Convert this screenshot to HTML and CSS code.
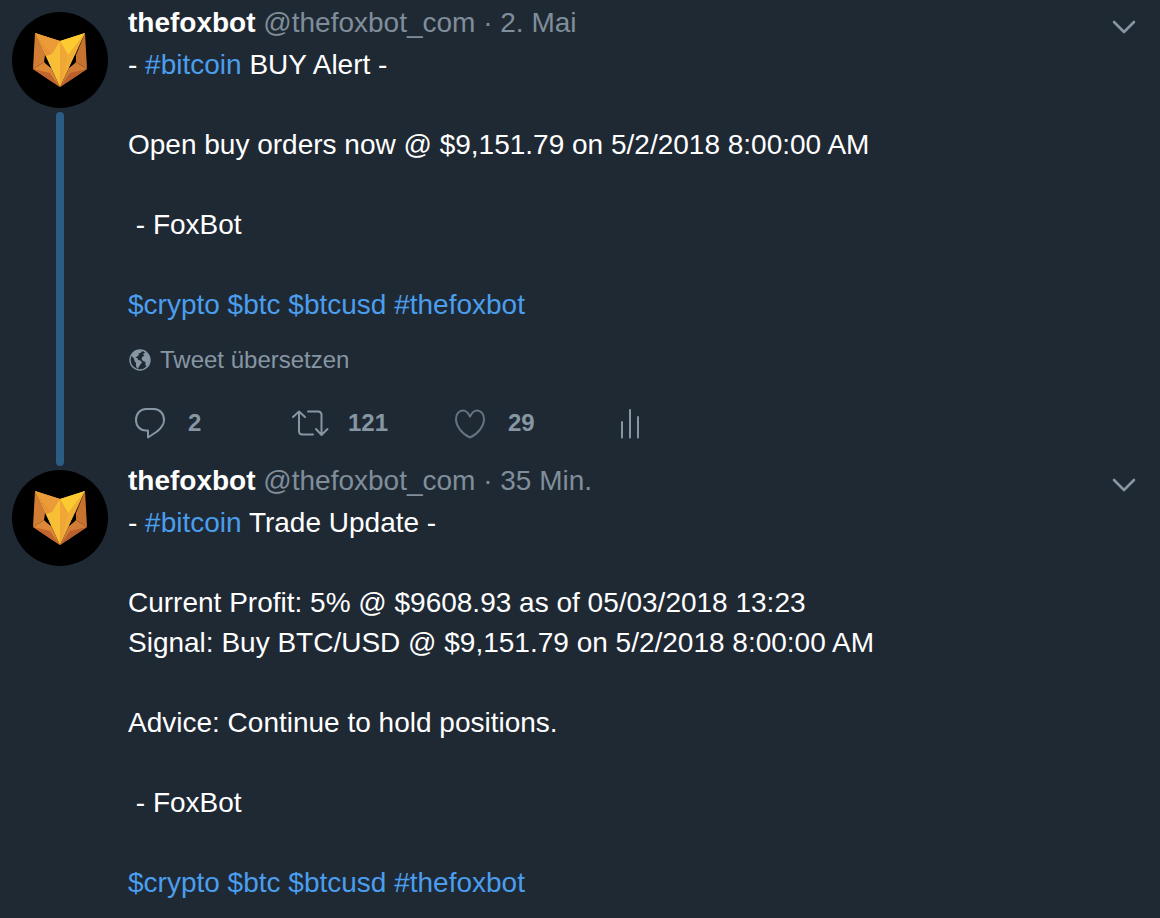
FILE: index.html
```
<!DOCTYPE html>
<html lang="de">

<head>
    <meta charset="UTF-8">
    <meta name="viewport" content="width=device-width, initial-scale=1">
    <title>thefoxbot</title>
    <link rel="stylesheet" href="styles.css">
</head>

<body>
    <!-- shared icons -->
    <svg class="sprite" aria-hidden="true">
        <symbol id="fox" viewBox="0 0 96 96">
            <circle cx="48" cy="48" r="48" fill="#000"/>
            <!-- ears -->
            <path d="M23 21L33 43L32 50L21 57Z" fill="#d27d33"/>
            <path d="M73 21L64 43L64 50L75 57Z" fill="#c8722f"/>
            <!-- cheeks -->
            <path d="M21 57L32 50L39 56L48 75Z" fill="#dd8737"/>
            <path d="M75 57L64 50L57 56L48 75Z" fill="#d27b35"/>
            <path d="M21 57L38 61L48 75Z" fill="#c0662e"/>
            <path d="M75 57L58 61L48 75Z" fill="#b9602c"/>
            <!-- face -->
            <path d="M23 21L48 29L48 75L33 43Z" fill="#f8be35"/>
            <path d="M23 21L48 29L40 42Z" fill="#eb9c38"/>
            <path d="M23 21L40 42L34 44Z" fill="#e89335"/>
            <path d="M73 21L48 29L48 75L63 43Z" fill="#f2ad35"/>
            <path d="M73 21L48 29L56 43Z" fill="#fcca31"/>
            <path d="M48 29L56 43L48 75Z" fill="#f0a637"/>
            <!-- eyes -->
            <path d="M33 43L39 56L33 51Z" fill="#000"/>
            <path d="M63 43L57 56L63 51Z" fill="#000"/>
        </symbol>
        <symbol id="chevron" viewBox="0 0 24 14">
            <path d="M2 2L12 12L22 2" fill="none" stroke="currentColor" stroke-width="2.6" stroke-linecap="round" stroke-linejoin="round"/>
        </symbol>
    </svg>

    <main class="timeline">
        <article class="tweet">
            <div class="side">
                <svg class="avatar" role="img" aria-label="thefoxbot"><use href="#fox"/></svg>
                <div class="thread"></div>
            </div>
            <div class="content">
                <header class="head">
                    <p class="meta"><a class="name" href="#">thefoxbot</a> @thefoxbot_com · 2. Mai</p>
                    <button class="more" type="button" aria-label="Mehr"><svg><use href="#chevron"/></svg></button>
                </header>
                <p class="text">- <a href="#">#bitcoin</a> BUY Alert -

Open buy orders now @ $9,151.79 on 5/2/2018 8:00:00 AM

 - FoxBot

<a href="#">$crypto</a> <a href="#">$btc</a> <a href="#">$btcusd</a> <a href="#">#thefoxbot</a></p>
                <button class="translate" type="button">
                    <svg viewBox="0 0 22 22">
                        <circle cx="11" cy="11" r="10" fill="none" stroke="currentColor" stroke-width="1.4"/>
                        <path d="M3 5C5 2.500 8 1 11.500 1L13 2.500L11.500 4L9.500 4.500L10 6L8 7.500L6.500 9L8.500 9L9 11L11.500 11.500L13 13.500L11 16L9.500 18.500L8.500 20L7 17L7 14L5.500 12L5 9.500L3 7.500Z" fill="currentColor"/>
                        <path d="M14 5L16.500 3L19.500 6L21 11L20 15L17.500 18L16.500 16L16.500 13L14 12L12.500 10L13.500 7.500L15.500 7Z" fill="currentColor"/>
                    </svg>
                    Tweet übersetzen
                </button>
                <div class="actions">
                    <button class="action" type="button" aria-label="2 Antworten">
                        <svg viewBox="0 0 44 40">
                            <path d="M18 6H26C32 6 36 11 36 17C36 23 32 26 29 28.500L20 34.500V27.500H18C12 27.500 8 23 8 17C8 11 12 6 18 6Z"/>
                        </svg>
                        2
                    </button>
                    <button class="action" type="button" aria-label="121 Retweets">
                        <svg viewBox="0 0 44 40">
                            <path d="M5 14L11 8.500L17 14M11 9V28Q11 31.500 14.500 31.500H25M20 8.500H30Q33.500 8.500 33.500 12V31M28 26L33.500 32L39.500 26"/>
                        </svg>
                        121
                    </button>
                    <button class="action like" type="button" aria-label="29 Gefällt mir">
                        <svg viewBox="0 0 44 40">
                            <path d="M22 13.500C20 9.500 18 7.500 15 7.500C11 7.500 8 11 8 16C8 23 14 31 22 34.500C30 31 36 23 36 16C36 11 33 7.500 29 7.500C26 7.500 24 9.500 22 13.500Z"/>
                        </svg>
                        29
                    </button>
                    <button class="action" type="button" aria-label="Tweet-Aktivität">
                        <svg viewBox="0 0 44 40">
                            <path d="M14 19V34.500M22 7V34.500M30 14V34.500"/>
                        </svg>
                    </button>
                </div>
            </div>
        </article>

        <article class="tweet">
            <div class="side">
                <svg class="avatar" role="img" aria-label="thefoxbot"><use href="#fox"/></svg>
            </div>
            <div class="content">
                <header class="head">
                    <p class="meta"><a class="name" href="#">thefoxbot</a> @thefoxbot_com · 35 Min.</p>
                    <button class="more" type="button" aria-label="Mehr"><svg><use href="#chevron"/></svg></button>
                </header>
                <p class="text">- <a href="#">#bitcoin</a> Trade Update -

Current Profit: 5% @ $9608.93 as of 05/03/2018 13:23
Signal: Buy BTC/USD @ $9,151.79 on 5/2/2018 8:00:00 AM

Advice: Continue to hold positions.

 - FoxBot

<a href="#">$crypto</a> <a href="#">$btc</a> <a href="#">$btcusd</a> <a href="#">#thefoxbot</a></p>
            </div>
        </article>
    </main>
</body>

</html>
```
FILE: styles.css
```
* {
    box-sizing: border-box;
}

body,
p {
    margin: 0;
}

body {
    background: #1f2934;
    color: #fff;
    font-family: "Helvetica Neue", "Liberation Sans", Arial, sans-serif;
    font-size: 28px;
    line-height: 40px;
}

a {
    color: #4a9eed;
    text-decoration: none;
}

button {
    padding: 0;
    border: 0;
    background: none;
    color: #8796a3;
    font: inherit;
    cursor: pointer;
}

.sprite {
    position: absolute;
    width: 0;
    height: 0;
}

.timeline {
    min-height: 100vh;
    border-bottom: 1px solid #29273a;
}

.tweet {
    display: flex;
    gap: 20px;
    padding: 0 24px 0 12px;
}

.side {
    display: flex;
    flex: none;
    flex-direction: column;
    align-items: center;
    gap: 4px;
    padding-top: 12px;
}

.avatar {
    display: block;
    width: 96px;
    height: 96px;
}

/* runs on into the gap above the next avatar */
.thread {
    flex: 1;
    width: 8px;
    margin-bottom: -8px;
    border-radius: 4px;
    background: #2b5c83;
}

.content {
    flex: 1;
    min-width: 0;
    padding: 3px 0 15px;
}

.head {
    display: flex;
    justify-content: space-between;
    margin-bottom: 2px;
}

.meta {
    color: #7f8e9a;
}

.name {
    color: #fff;
    font-weight: bold;
}

.more svg {
    display: block;
    width: 24px;
    height: 14px;
    margin-top: 8px;
}

.text {
    white-space: pre-wrap;
}

.translate {
    display: flex;
    align-items: center;
    gap: 9px;
    margin: 15px 0 23px;
    padding-left: 1px;
    font-size: 24px;
}

.translate svg {
    width: 22px;
    height: 22px;
}

.actions {
    display: flex;
}

.action {
    display: flex;
    align-items: center;
    gap: 16px;
    width: 160px;
    height: 40px;
    font-size: 24px;
    font-weight: bold;
}

.action svg {
    width: 44px;
    height: 40px;
    fill: none;
    stroke: currentColor;
    stroke-width: 2;
    stroke-linecap: round;
    stroke-linejoin: round;
}

.like svg {
    stroke: #637482;
}
```
